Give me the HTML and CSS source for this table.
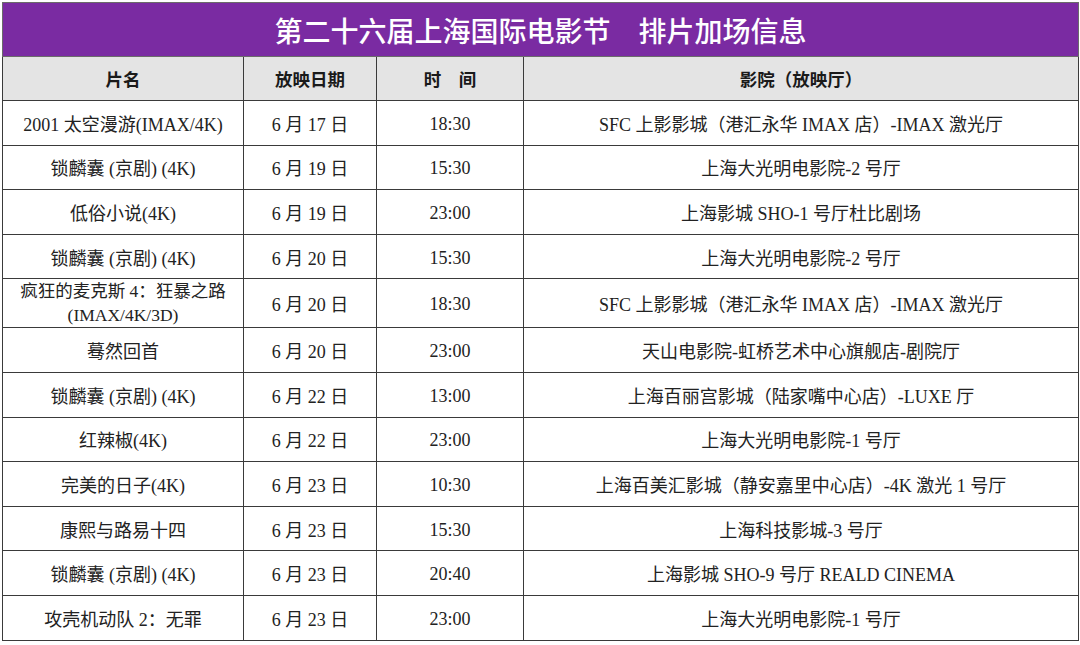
FILE: index.html
```html
<!DOCTYPE html>
<html lang="zh-CN">
<head>
<meta charset="utf-8">
<title>排片加场信息</title>
<link rel="stylesheet" href="styles.css">
</head>
<body>
<div class="page">
<table class="sched">
  <colgroup>
    <col class="c-film">
    <col class="c-date">
    <col class="c-time">
    <col class="c-venue">
  </colgroup>
  <thead>
    <tr class="title-row"><th colspan="4" class="title">第二十六届上海国际电影节　排片加场信息</th></tr>
    <tr class="head-row">
      <th>片名</th>
      <th>放映日期</th>
      <th>时　间</th>
      <th>影院（放映厅）</th>
    </tr>
  </thead>
  <tbody>
    <tr><td>2001 太空漫游(IMAX/4K)</td><td>6 月 17 日</td><td class="tm">18:30</td><td>SFC 上影影城（港汇永华 IMAX 店）-IMAX 激光厅</td></tr>
    <tr><td>锁麟囊 (京剧) (4K)</td><td>6 月 19 日</td><td class="tm">15:30</td><td>上海大光明电影院-2 号厅</td></tr>
    <tr><td>低俗小说(4K)</td><td>6 月 19 日</td><td class="tm">23:00</td><td>上海影城 SHO-1 号厅杜比剧场</td></tr>
    <tr><td>锁麟囊 (京剧) (4K)</td><td>6 月 20 日</td><td class="tm">15:30</td><td>上海大光明电影院-2 号厅</td></tr>
    <tr class="tall"><td class="two">疯狂的麦克斯 4：狂暴之路<br>(IMAX/4K/3D)</td><td>6 月 20 日</td><td class="tm">18:30</td><td>SFC 上影影城（港汇永华 IMAX 店）-IMAX 激光厅</td></tr>
    <tr><td>蓦然回首</td><td>6 月 20 日</td><td class="tm">23:00</td><td>天山电影院-虹桥艺术中心旗舰店-剧院厅</td></tr>
    <tr><td>锁麟囊 (京剧) (4K)</td><td>6 月 22 日</td><td class="tm">13:00</td><td>上海百丽宫影城（陆家嘴中心店）-LUXE 厅</td></tr>
    <tr><td>红辣椒(4K)</td><td>6 月 22 日</td><td class="tm">23:00</td><td>上海大光明电影院-1 号厅</td></tr>
    <tr><td>完美的日子(4K)</td><td>6 月 23 日</td><td class="tm">10:30</td><td>上海百美汇影城（静安嘉里中心店）-4K 激光 1 号厅</td></tr>
    <tr><td>康熙与路易十四</td><td>6 月 23 日</td><td class="tm">15:30</td><td>上海科技影城-3 号厅</td></tr>
    <tr><td>锁麟囊 (京剧) (4K)</td><td>6 月 23 日</td><td class="tm">20:40</td><td>上海影城 SHO-9 号厅 REALD CINEMA</td></tr>
    <tr><td>攻壳机动队 2：无罪</td><td>6 月 23 日</td><td class="tm">23:00</td><td>上海大光明电影院-1 号厅</td></tr>
  </tbody>
</table>
</div>
</body>
</html>
```

FILE: styles.css
```css
html, body {
  margin: 0;
  padding: 0;
  background: #ffffff;
}

.page {
  padding: 2px 0 0 2px;
}

.sched {
  border-collapse: collapse;
  table-layout: fixed;
  width: 1076px;
  font-family: "Liberation Serif", "Noto Sans CJK SC", serif;
  color: #222222;
  font-size: 18px;
  font-weight: 400;
}

.c-film { width: 241px; }
.c-date { width: 133px; }
.c-time { width: 147px; }
.c-venue { width: 555px; }

.sched th,
.sched td {
  border: 1px solid #3a3a3a;
  text-align: center;
  vertical-align: middle;
  padding: 0 1px;
  white-space: nowrap;
}

.sched .title {
  background: #7a2ba2;
  color: #ffffff;
  font-family: "Noto Sans CJK SC", "Noto Sans", sans-serif;
  font-size: 28px;
  font-weight: 500;
  border-color: #6b6b6b;
}

.title-row { height: 54px; }

.head-row { height: 44px; }

.head-row th {
  background: #e4e4e4;
  font-family: "Noto Sans CJK SC", "Noto Sans", sans-serif;
  font-size: 17.5px;
  font-weight: 700;
  color: #1a1a1a;
}

.sched tbody tr { height: 44.6px; }

.sched tbody tr.tall { height: 49px; }

.sched td.two {
  line-height: 24px;
  font-size: 17.5px;
}

.sched td.tm {
  padding-top: 3px;
}
```
